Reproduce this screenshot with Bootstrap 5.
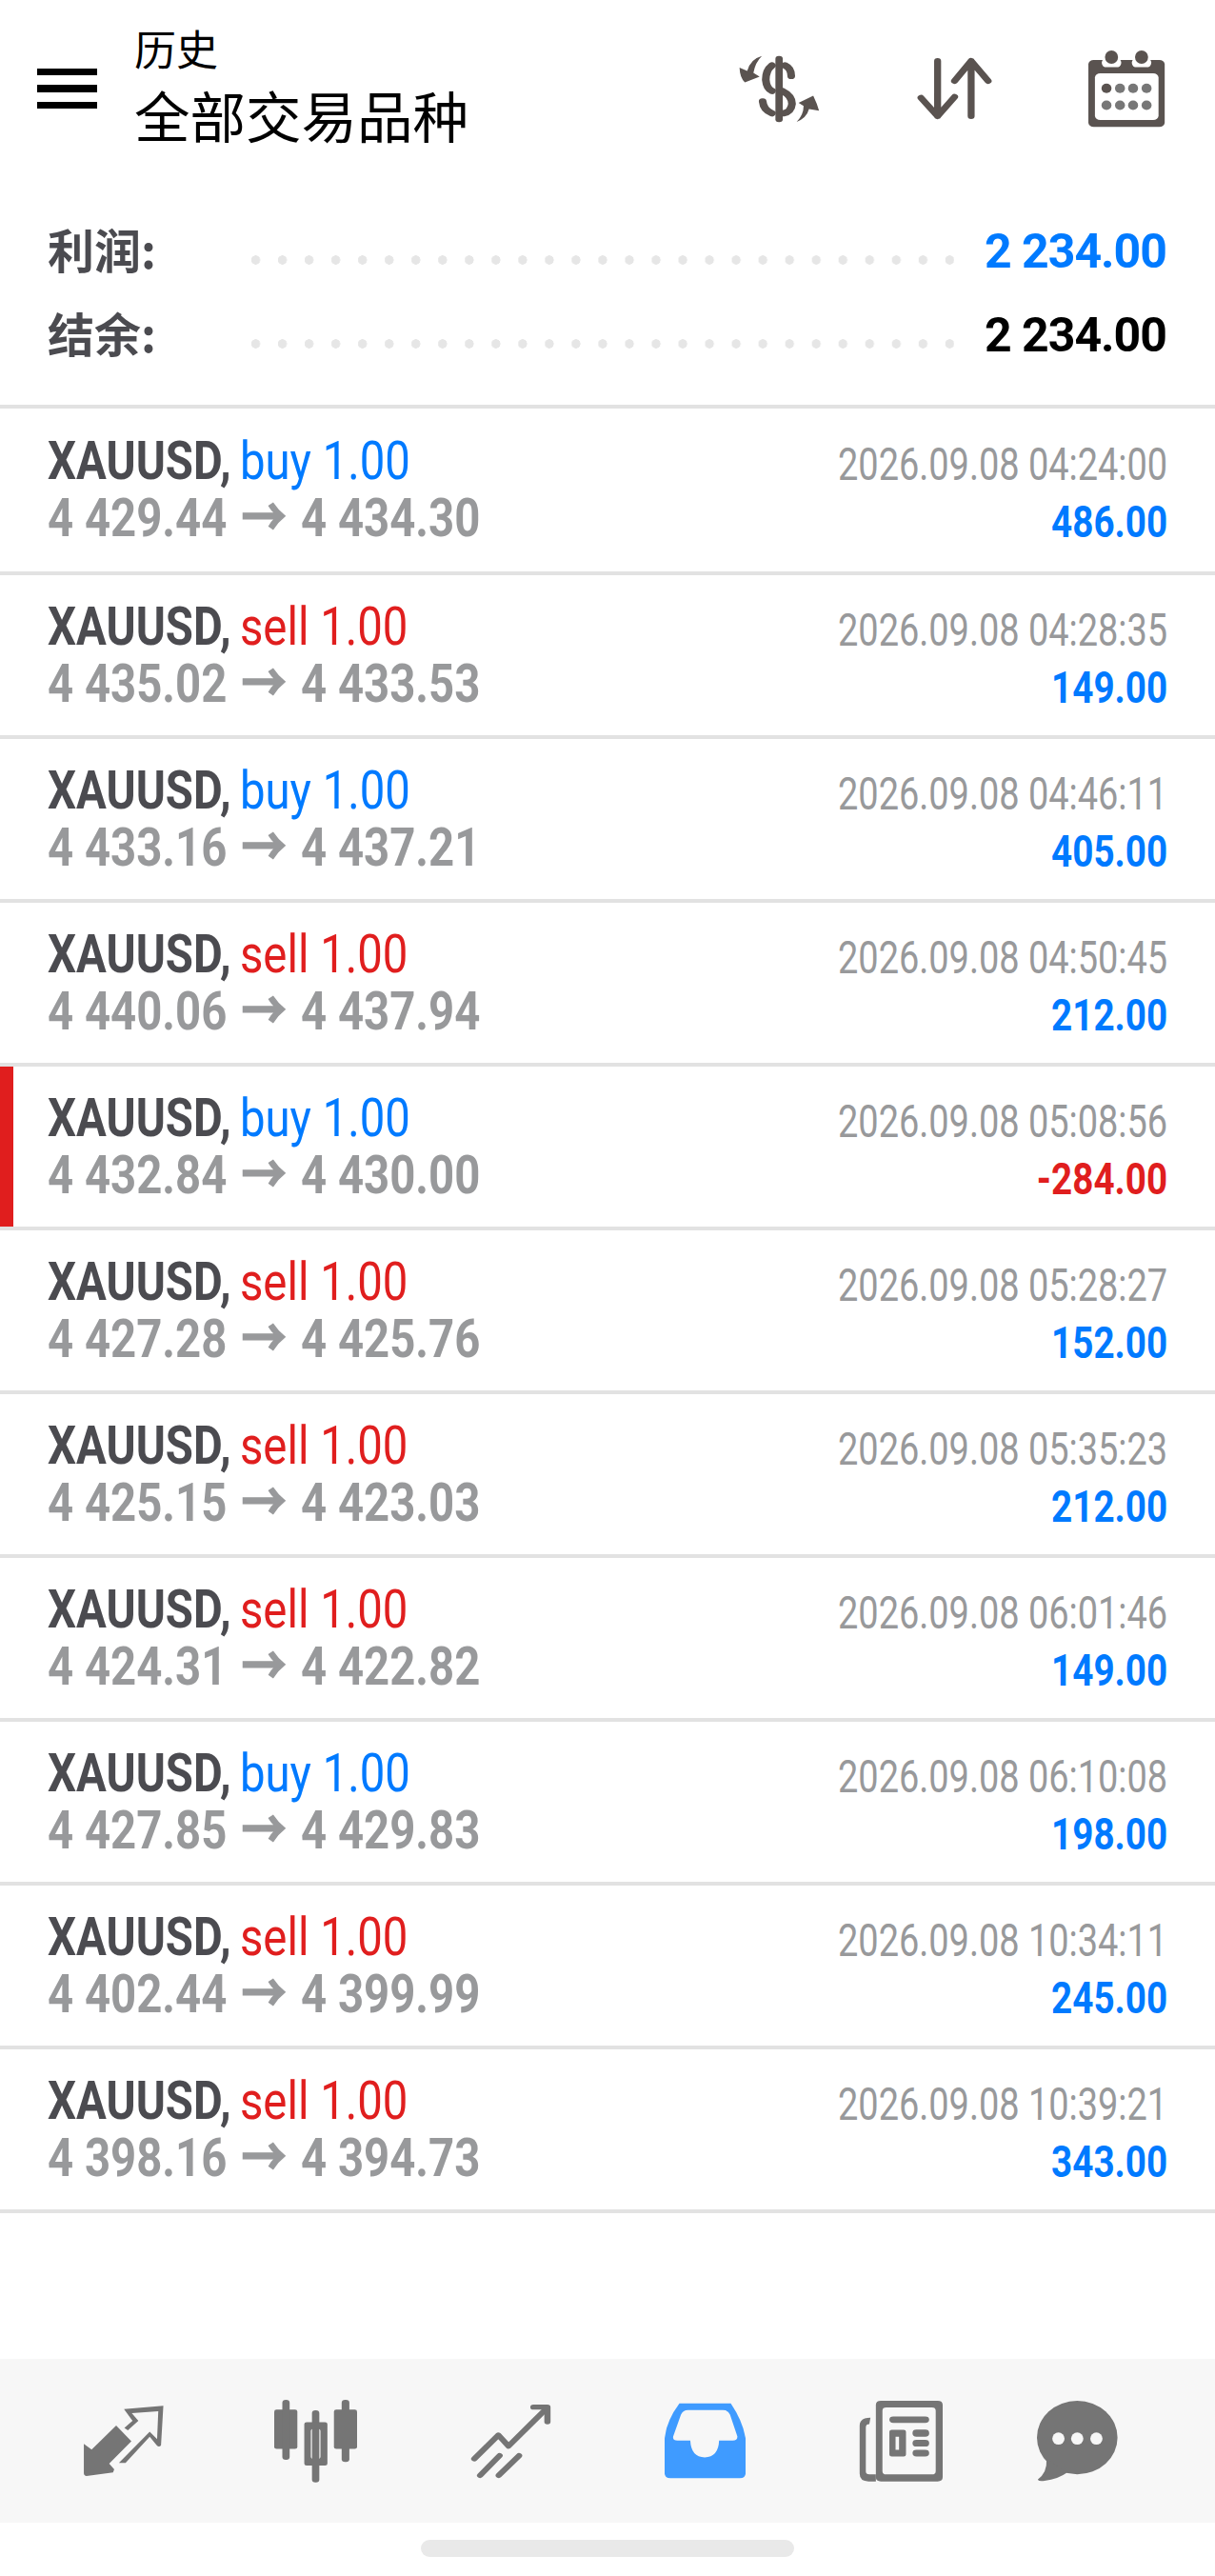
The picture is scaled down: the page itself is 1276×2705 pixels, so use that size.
<!DOCTYPE html>
<html lang="zh-CN">
<head>
    <meta charset="UTF-8">
    <meta name="viewport" content="width=device-width, initial-scale=1.0">
    <title>历史</title>
    <link href="https://cdn.jsdelivr.net/npm/bootstrap@5.3.0/dist/css/bootstrap.min.css" rel="stylesheet">
    <style>
        body {
            font-family: Roboto, "Noto Sans CJK SC", sans-serif;
            background-color: #fff;
            color: #000;
        }
        .screen { width: 1276px; height: 2705px; }
        .top-bar { height: 198px; padding-bottom: 12px; }
        .menu-btn { width: 63px; margin-left: 39px; margin-right: 39px; gap: 10px; }
        .menu-btn span { height: 7.5px; background-color: #000; }
        .title-box { padding-top: 25px; }
        .title-sub { font-size: 44px; line-height: 50px; margin-bottom: 11px; font-family: "Noto Sans CJK SC", sans-serif; }
        .title-main { font-size: 58.5px; line-height: 68px; font-family: "Noto Sans CJK SC", sans-serif; }
        .top-icons svg { display: block; }
        .icon-deal { width: 90px; height: 73px; margin-right: 99px; }
        .icon-sort { width: 81px; height: 66px; margin-right: 98px; }
        .icon-date { width: 85px; height: 83px; margin-right: 50px; }

        .summary { height: 231px; padding: 19px 51px 0 50px; border-bottom: 4px solid #e2e2e2; }
        .sum-line { height: 88px; }
        .sum-label { width: 214px; font-size: 49px; line-height: 60px; font-weight: 700; color: #4b4b50; font-family: "Noto Sans CJK SC", sans-serif; }
        .sum-dots {
            width: 738px; height: 10px; margin-top: 24px;
            background-image: radial-gradient(circle at 4.5px 5px, #e6e6e6 4.5px, transparent 5px);
            background-size: 28.04px 10px;
            background-repeat: repeat-x;
        }
        .sum-value { font-size: 50px; line-height: 60px; font-weight: 700; letter-spacing: -1px; margin-top: 6px; }

        .deal-row { height: 168px; padding: 0 50px; border-bottom: 4px solid #e2e2e2; box-sizing: content-box; }
        .deal-row:first-child { height: 171px; }
        .deal-row.is-loss { box-shadow: inset 14px 0 0 #e01e1e; }
        .deal-left, .deal-right { line-height: 60px; white-space: nowrap; }
        .deal-left { padding-top: 24px; }
        .deal-right { padding-top: 28px; }
        .deal-row:first-child .deal-left { padding-top: 25px; }
        .deal-row:first-child .deal-right { padding-top: 29px; }
        .squeeze-l, .squeeze-r { display: block; height: 60px; }
        .squeeze-l { transform: scaleX(.845); transform-origin: left center; }
        .squeeze-r { transform: scaleX(.79); transform-origin: right center; }
        .deal-profit.squeeze-r { transform: scaleX(.84); }
        .deal-main { font-size: 56px; color: #4b4b50; font-weight: 700; }
        .deal-main .side { font-weight: 400; margin-left: -3px; }
        .deal-prices { font-size: 56px; color: #98999b; font-weight: 700; }
        .price-arrow { margin: 0 4px; -webkit-text-stroke: 1.5px #98999b; }
        .deal-time { font-size: 48px; color: #98999b; }
        .deal-profit { font-size: 46px; font-weight: 700; }
        .c-blue { color: #007aff; }
        .c-red { color: #e01e1e; }

        .tab-bar { height: 172px; background-color: #f7f7f7; padding-left: 86px; gap: 119px; }
        .tab-bar svg { display: block; }
        .tab-first { margin-right: -5px; }
        .tab-last { margin-left: -20px; }
        .home-line { width: 392px; height: 18px; border-radius: 9px; background-color: #e9e9e9; margin-bottom: 2px; }
        .home-area { height: 56px; }
    </style>
</head>
<body>
<div class="screen d-flex flex-column">
    <!-- 顶部栏 -->
    <header class="top-bar d-flex align-items-center">
        <div class="menu-btn d-flex flex-column flex-shrink-0">
            <span></span><span></span><span></span>
        </div>
        <div class="title-box flex-grow-1 align-self-start">
            <div class="title-sub">历史</div>
            <div class="title-main">全部交易品种</div>
        </div>
        <div class="top-icons d-flex align-items-center">
            <svg class="icon-deal" viewBox="335 170 222 218" preserveAspectRatio="none">
                <rect x="437" y="175" width="19" height="208" rx="9" fill="#5a5350"/>
                <g fill="none" stroke="#5a5350" stroke-width="20" stroke-linecap="round">
                    <path d="M462 205Q478 214 478 238"/>
                    <path d="M428 205Q412 220 412 250Q414 278 428 285"/>
                    <path d="M455 285Q480 300 480 325Q478 350 458 355"/>
                    <path d="M428 355Q406 345 404 318"/>
                </g>
                <path d="M402 175Q372 185 364 222L344 212Q345 245 358 258L396 240L380 228Q385 195 402 175Z" fill="#5a5350"/>
                <path d="M492 382Q518 370 524 342L550 347Q545 325 535 300L497 322L510 332Q510 360 492 382Z" fill="#5a5350"/>
            </svg>
            <svg class="icon-sort" viewBox="795 180 200 198" preserveAspectRatio="none">
                <g fill="none" stroke="#5a5350" stroke-width="18" stroke-linecap="round" stroke-linejoin="round">
                    <path d="M851 192V366M808 308L851 366L895 305"/>
                    <path d="M938 366V192M895 255L938 192L982 255"/>
                </g>
            </svg>
            <svg class="icon-date" viewBox="1235 150 210 250" preserveAspectRatio="none">
                <rect x="1240" y="183" width="198" height="212" rx="14" fill="#5a5350"/>
                <rect x="1257" y="225" width="165" height="148" rx="14" fill="#fff"/>
                <rect x="1275" y="178" width="50" height="28" rx="12" fill="#fff"/>
                <rect x="1353" y="178" width="50" height="28" rx="12" fill="#fff"/>
                <ellipse cx="1300" cy="174" rx="17" ry="21" fill="#5a5350"/>
                <ellipse cx="1378" cy="174" rx="17" ry="21" fill="#5a5350"/>
                <g fill="#777">
                    <ellipse cx="1287" cy="273" rx="13" ry="15" fill="#5a5350"/><ellipse cx="1322" cy="273" rx="13" ry="15"/><ellipse cx="1356" cy="273" rx="13" ry="15"/><ellipse cx="1391" cy="273" rx="13" ry="15"/>
                    <ellipse cx="1287" cy="326" rx="13" ry="15"/><ellipse cx="1322" cy="326" rx="13" ry="15"/><ellipse cx="1356" cy="326" rx="13" ry="15"/><ellipse cx="1391" cy="326" rx="13" ry="15"/>
                </g>
            </svg>
        </div>
    </header>

    <!-- 汇总 -->
    <section class="summary">
        <div class="sum-line d-flex align-items-center">
            <div class="sum-label">利润:</div>
            <div class="sum-dots"></div>
            <div class="sum-value c-blue ms-auto">2 234.00</div>
        </div>
        <div class="sum-line d-flex align-items-center">
            <div class="sum-label">结余:</div>
            <div class="sum-dots"></div>
            <div class="sum-value ms-auto">2 234.00</div>
        </div>
    </section>

    <!-- 成交列表 -->
    <div id="deal-list"></div>

    <div class="flex-grow-1"></div>

    <!-- 底部导航 -->
    <nav class="tab-bar d-flex align-items-center">
        <svg class="tab-first" width="88" height="77" viewBox="210 257 215 230" preserveAspectRatio="none" fill="#757575">
            <path d="M215 380L235 398L298 323L337 372L280 442L293 460L290 470L222 481Q215 480 215 472Z"/>
            <path d="M318 271L419 261L413 385Q408 392 402 385L384 358L322 440L305 440L384 342L403 365L406 278L338 284L355 308L328 338L319 330L340 308Z"/>
        </svg>
        <svg width="87" height="87" viewBox="707 237 215 260" preserveAspectRatio="none" fill="#757575">
            <rect x="707" y="268" width="60" height="123" rx="6"/>
            <rect x="728" y="237" width="19" height="188" rx="9"/>
            <rect x="862" y="268" width="60" height="123" rx="6"/>
            <rect x="882" y="237" width="20" height="195" rx="9"/>
            <rect x="805" y="270" width="19" height="226" rx="9"/>
            <path fill-rule="evenodd" d="M791 307H839Q845 307 845 313V437Q845 443 839 443H791Q785 443 785 437V313Q785 307 791 307ZM808 328Q802 328 802 334V416Q802 422 808 422H821Q827 422 827 416V334Q827 328 821 328Z"/>
        </svg>
        <svg width="85" height="80" viewBox="1210 243 208 240" preserveAspectRatio="none">
            <g fill="none" stroke="#757575" stroke-width="16" stroke-linecap="round" stroke-linejoin="round">
                <path d="M1220 420L1282 345L1308 380L1405 262"/>
                <path d="M1372 257H1408V303"/>
                <path d="M1235 472L1285 410"/>
                <path d="M1283 472L1335 410"/>
            </g>
        </svg>
        <svg width="85" height="80" viewBox="145 245 208 237" preserveAspectRatio="none">
            <path d="M183 247H315Q345 300 353 355V465Q353 480 338 480H160Q145 480 145 465V355Q150 300 183 247Z" fill="#3f9bff"/>
            <path d="M205 268H295Q308 268 313 282L332 350Q332 363 320 363H285Q283 415 248 415Q213 415 211 363H178Q165 363 167 350L187 282Q192 268 205 268Z" fill="#f7f7f7"/>
        </svg>
        <svg width="88" height="85" viewBox="645 237 217 253" preserveAspectRatio="none" fill="#757575">
            <path fill-rule="evenodd" d="M702 237H849Q862 237 862 250V476Q862 489 849 489H702Q689 489 689 476V250Q689 237 702 237ZM716 258Q706 258 706 268V457Q706 467 716 467H834Q844 467 844 457V268Q844 258 834 258Z"/>
            <path d="M675 290Q647 290 647 315V465Q647 489 670 489H689V467H672Q663 467 663 458V320Q663 310 672 310Z"/>
            <rect x="724" y="286" width="103" height="20" rx="10"/>
            <path fill-rule="evenodd" d="M730 328H761Q767 328 767 334V405Q767 411 761 411H730Q724 411 724 405V334Q724 328 730 328ZM740 349V390H749V349Z"/>
            <rect x="784" y="327" width="43" height="22" rx="10"/>
            <rect x="784" y="359" width="43" height="21" rx="10"/>
            <rect x="784" y="390" width="43" height="21" rx="10"/>
        </svg>
        <svg class="tab-last" width="85" height="85" viewBox="1105 237 211 253" preserveAspectRatio="none" fill="#757575">
            <ellipse cx="1210" cy="352" rx="105" ry="115"/>
            <path d="M1130 420Q1132 462 1107 483Q1110 490 1125 487Q1160 482 1185 460Z"/>
            <g fill="#f7f7f7">
                <ellipse cx="1161" cy="355" rx="16" ry="19"/>
                <ellipse cx="1210" cy="355" rx="16" ry="19"/>
                <ellipse cx="1260" cy="355" rx="16" ry="19"/>
            </g>
        </svg>
    </nav>
    <div class="home-area d-flex justify-content-center align-items-center">
        <div class="home-line"></div>
    </div>
</div>

<script>
    // 成交记录
    const deals = [
        ['buy', '4 429.44', '4 434.30', '04:24:00', '486.00'],
        ['sell', '4 435.02', '4 433.53', '04:28:35', '149.00'],
        ['buy', '4 433.16', '4 437.21', '04:46:11', '405.00'],
        ['sell', '4 440.06', '4 437.94', '04:50:45', '212.00'],
        ['buy', '4 432.84', '4 430.00', '05:08:56', '-284.00'],
        ['sell', '4 427.28', '4 425.76', '05:28:27', '152.00'],
        ['sell', '4 425.15', '4 423.03', '05:35:23', '212.00'],
        ['sell', '4 424.31', '4 422.82', '06:01:46', '149.00'],
        ['buy', '4 427.85', '4 429.83', '06:10:08', '198.00'],
        ['sell', '4 402.44', '4 399.99', '10:34:11', '245.00'],
        ['sell', '4 398.16', '4 394.73', '10:39:21', '343.00']
    ];

    const list = document.getElementById('deal-list');
    deals.forEach(d => {
        const loss = d[4].startsWith('-');
        const row = document.createElement('div');
        row.className = 'deal-row d-flex justify-content-between' + (loss ? ' is-loss' : '');
        row.innerHTML = `
            <div class="deal-left">
                <span class="squeeze-l deal-main">XAUUSD, <span class="side ${d[0] === 'buy' ? 'c-blue' : 'c-red'}">${d[0]} 1.00</span></span>
                <span class="squeeze-l deal-prices">${d[1]} <span class="price-arrow">→</span> ${d[2]}</span>
            </div>
            <div class="deal-right text-end">
                <span class="squeeze-r deal-time">2026.09.08 ${d[3]}</span>
                <span class="squeeze-r deal-profit ${loss ? 'c-red' : 'c-blue'}">${d[4]}</span>
            </div>`;
        list.appendChild(row);
    });
</script>
<script src="https://cdn.jsdelivr.net/npm/bootstrap@5.3.0/dist/js/bootstrap.bundle.min.js"></script>
</body>
</html>
